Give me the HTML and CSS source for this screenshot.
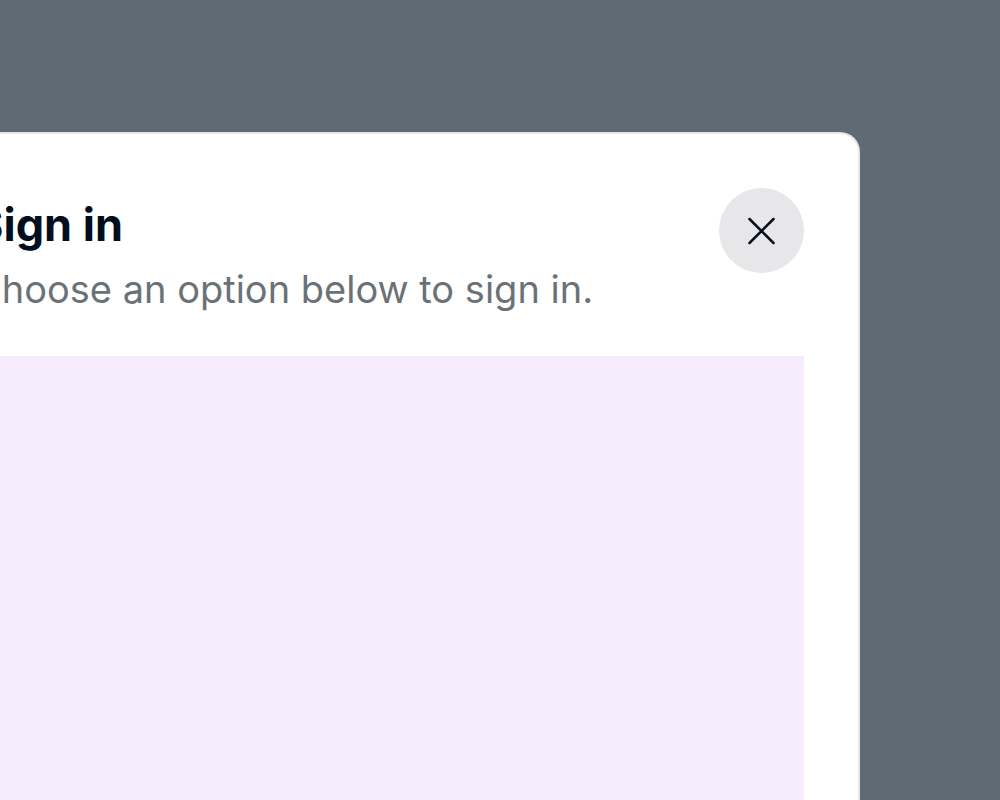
FILE: index.html
```
<!DOCTYPE html>
<html lang="en">

<head>
    <meta charset="utf-8">
    <meta name="viewport" content="width=device-width,initial-scale=1.0">
    <title>Sign in</title>
    <link rel="stylesheet" href="styles.css">
</head>

<body>
    <div class="overlay">
        <div class="modal" role="dialog" aria-labelledby="modal-title" aria-describedby="modal-text">
            <div class="modal-header">
                <div class="modal-heading">
                    <h1 class="modal-title" id="modal-title">Sign in</h1>
                    <p class="modal-text" id="modal-text">Choose an option below to sign in.</p>
                </div>
                <button class="close-button" type="button" aria-label="Close">
                    <svg class="close-icon" viewBox="0 0 28 28" aria-hidden="true">
                        <path d="M1.5 2 25.5 26M25.5 2 1.5 26" />
                    </svg>
                </button>
            </div>
            <div class="modal-content"></div>
        </div>
    </div>
</body>

</html>
```
FILE: styles.css
```
body {
    margin: 0;
    font-family: Inter, "Liberation Sans", sans-serif;
    background: #606a73;
}

.overlay {
    display: flex;
    min-height: 100vh;
    padding: 132px 140px 0 0;
    box-sizing: border-box;
    overflow: hidden;
}

.modal {
    display: flex;
    flex-direction: column;
    flex-grow: 1;
    margin-left: -82px;
    padding: 54px 54px 0;
    background: #fff;
    border: 2px solid #e6e8ea;
    border-bottom: none;
    border-radius: 20px 20px 0 0;
}

.modal-header {
    display: flex;
    justify-content: space-between;
    align-items: flex-start;
    margin-bottom: 36px;
}

.modal-heading {
    padding-top: 4px;
}

.modal-title {
    margin: 0;
    font-size: 45px;
    line-height: 66px;
    font-weight: 700;
    color: #000f1e;
}

.modal-text {
    margin: 0;
    font-size: 38px;
    line-height: 62px;
    color: #6a7278;
}

.close-button {
    display: flex;
    justify-content: center;
    align-items: center;
    width: 85px;
    height: 85px;
    padding: 0;
    border: none;
    border-radius: 50%;
    background: #e7e7e9;
    cursor: pointer;
}

.close-icon {
    width: 28px;
    height: 28px;
    fill: none;
    stroke: #000f1e;
    stroke-width: 2.5;
    stroke-linecap: round;
}

.modal-content {
    flex-grow: 1;
    background: #f7ebfe;
}
```
